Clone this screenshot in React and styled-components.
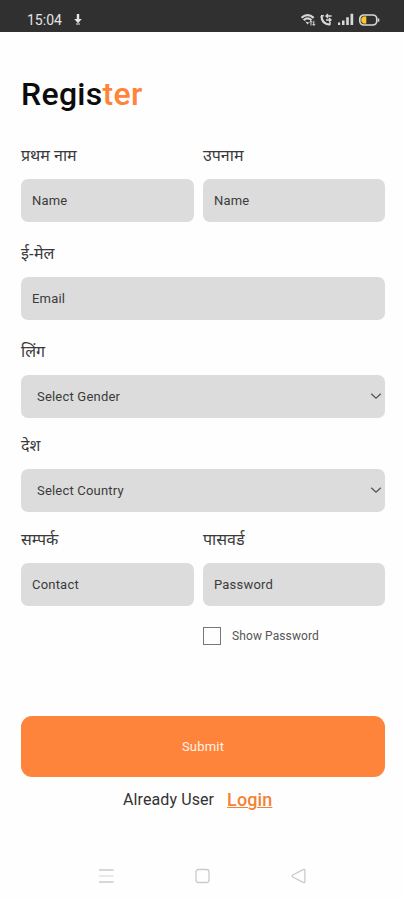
import React from "react";
import styled, { createGlobalStyle } from "styled-components";

const GlobalStyle = createGlobalStyle`
  * { box-sizing: border-box; }
  body { margin: 0; background: #fff; font-family: Roboto, "Noto Sans", sans-serif; }
`;

const Screen = styled.div`
  width: 404px;
  height: 900px;
  display: flex;
  flex-direction: column;
  background: #fefefe;
  overflow: hidden;
`;

const StatusBar = styled.header`
  height: 32px;
  flex: none;
  display: flex;
  align-items: center;
  padding: 8px 24px 0 27px;
  background: #303030;
  color: #e4e4e4;
`;

const Clock = styled.span`
  font-size: 14px;
  line-height: 16px;
  width: 46px;
`;

const StatusIcons = styled.div`
  margin-left: auto;
  display: flex;
  align-items: center;
`;

const Form = styled.form`
  flex: none;
  width: 364px;
  height: 826px;
  margin-left: 21px;
  padding-top: 41px;
  display: flex;
  flex-direction: column;
`;

const Title = styled.h1`
  margin: 0 0 28px;
  font-size: 32px;
  line-height: 42px;
  font-weight: 500;
  letter-spacing: 0.3px;
  color: #0c0c0c;
`;

const Accent = styled.span`
  color: #ff8339;
`;

const Row = styled.div`
  display: grid;
  grid-template-columns: ${(p) => (p.$split ? "173px 182px" : "1fr")};
  column-gap: 9px;
  margin-bottom: ${(p) => p.$gap || "18px"};
`;

const Label = styled.label`
  display: block;
  height: 36px;
  line-height: 24px;
  font-family: "Noto Sans", "Noto Sans Devanagari", sans-serif;
  font-size: 16px;
  color: #3a3a3a;
  white-space: nowrap;
`;

const Control = styled.div`
  height: 43px;
  display: flex;
  align-items: center;
  justify-content: space-between;
  padding: 0 3px 1px ${(p) => (p.$select ? "16px" : "11px")};
  border-radius: 7px;
  background: #dcdcdc;
  color: #3b3b3b;
  font-size: 13px;
  letter-spacing: 0.2px;
`;

const CheckRow = styled.label`
  display: flex;
  align-items: center;
  height: 18px;
  margin: 21px 0 71px 182px;
  font-size: 12px;
  letter-spacing: 0.1px;
  color: #555;
`;

const CheckBox = styled.span`
  width: 18px;
  height: 18px;
  margin-right: 11px;
  border: 1px solid #777;
`;

const Submit = styled.button`
  height: 61px;
  flex: none;
  border: 0;
  border-radius: 11px;
  background: #ff843b;
  color: #fff3e9;
  font: 400 13px Roboto, sans-serif;
  letter-spacing: 0.2px;
`;

const Footer = styled.p`
  display: flex;
  align-items: center;
  gap: 13px;
  margin: 11px 0 0 102px;
  font-size: 16px;
  line-height: 24px;
  letter-spacing: 0.1px;
  color: #333;
`;

const LoginLink = styled.a`
  font-size: 18px;
  font-weight: 500;
  color: #f58233;
  text-decoration: underline;
  text-decoration-thickness: 1px;
`;

const NavBar = styled.nav`
  display: flex;
  align-items: center;
  justify-content: space-between;
  width: 210px;
  height: 36px;
  margin-left: 97px;
`;

const Field = ({ label, text, select }) => (
  <div>
    <Label>{label}</Label>
    <Control $select={select}>
      {text}
      {select && (
        <svg width="12" height="12" viewBox="0 0 12 12" fill="none" stroke="#555" strokeWidth="1.3">
          <path d="M1.2 3.8 6 8.2l4.8-4.4" />
        </svg>
      )}
    </Control>
  </div>
);

const DownloadIcon = () => (
  <svg width="10" height="12" viewBox="0 0 10 12" fill="#e6e6e6">
    <path d="M3.8 0h2.4v5h2.6L5 9.2 1.2 5h2.6z" />
    <path d="M3 9.5h4v1H3z" />
  </svg>
);

const SystemIcons = () => (
  <svg width="80" height="16" viewBox="0 0 80 16" fill="none" stroke="#d8d8d8">
    <path d="M1.5 5.8Q7.5.4 13.7 5.8M3.7 8.2q3.8-3.5 7.8 0" strokeWidth="2.2" />
    <path d="m5.2 9.4 2.4 3 1.6-2z" fill="#d8d8d8" stroke="none" />
    <path d="M11 13.5V8.8m-1.6 1.6L11 8.8l1.6 1.6M13.8 8.8v4.7m-1.4-1.6 1.4 1.6 1.4-1.6" strokeWidth="1" />
    <path d="M21.5 4c.1 5 3.1 8.3 8.4 8.6" strokeWidth="2.2" />
    <path d="M21 3.8h2.8M30 10v3" strokeWidth="1.5" />
    <path d="M26 8h5m-2-2 2 2-2 1.8M31.6 4H26m2-2-2 2 2 2" strokeWidth="1.3" />
    <path d="M38 10.5h2.2V13H38zM42 8.5h2.5V13H42zM46.2 5.2h2.6V13h-2.6zM50.5 1.8h2.7V13h-2.7z" fill="#d8d8d8" stroke="none" />
    <rect x="59.8" y="3" width="17" height="10" rx="4" strokeWidth="1.7" />
    <path d="M66 4.7v6.6h-2c-3.3 0-3.3-6.6 0-6.6z" fill="#fdc928" stroke="#fdc928" strokeWidth=".6" />
    <path d="M78.6 6.5v3.2" strokeWidth="1.4" />
  </svg>
);

const NavIcon = ({ children }) => (
  <svg width="18" height="18" viewBox="0 0 18 18" fill="none" stroke="#cacaca" strokeWidth="1.3" strokeLinejoin="round">
    {children}
  </svg>
);

export default function App() {
  return (
    <>
      <GlobalStyle />
      <Screen>
        <StatusBar>
          <Clock>15:04</Clock>
          <DownloadIcon />
          <StatusIcons><SystemIcons /></StatusIcons>
        </StatusBar>
        <Form>
          <Title>Regis<Accent>ter</Accent></Title>
          <Row $split $gap="19px">
            <Field label="प्रथम नाम" text="Name" />
            <Field label="उपनाम" text="Name" />
          </Row>
          <Row $gap="19px"><Field label="ई-मेल" text="Email" /></Row>
          <Row $gap="15px"><Field label="लिंग" text="Select Gender" select /></Row>
          <Row $gap="15px"><Field label="देश" text="Select Country" select /></Row>
          <Row $split $gap="0">
            <Field label="सम्पर्क" text="Contact" />
            <Field label="पासवर्ड" text="Password" />
          </Row>
          <CheckRow><CheckBox />Show Password</CheckRow>
          <Submit type="button">Submit</Submit>
          <Footer>Already User <LoginLink>Login</LoginLink></Footer>
        </Form>
        <NavBar>
          <NavIcon><path d="M2 3h14.5M2 15h14.5" /><path d="M2 9h14.5" stroke="#dedede" /></NavIcon>
          <NavIcon><rect x="3" y="2.5" width="13" height="13" rx="2.5" /></NavIcon>
          <NavIcon><path d="m3.5 8 10.8-5.4q1.6-.5 1.6 1v10.8q0 1.5-1.6 1L3.5 10q-1-1 0-2z" /></NavIcon>
        </NavBar>
      </Screen>
    </>
  );
}
